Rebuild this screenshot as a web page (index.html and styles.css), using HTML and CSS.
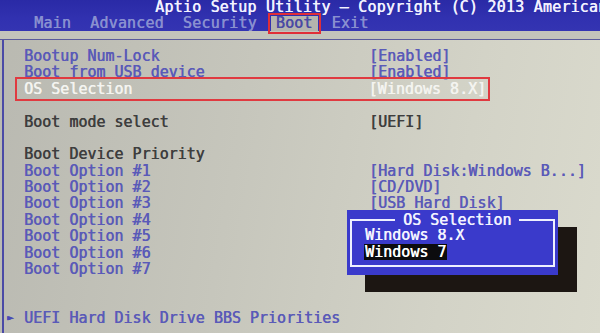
FILE: index.html
```html
<!DOCTYPE html>
<html>
<head>
<meta charset="utf-8">
<link rel="stylesheet" href="styles.css">
</head>
<body>
<div class="screen">
  <header class="top">
    <div class="title">Aptio Setup Utility – Copyright (C) 2013 American</div>
    <nav class="tabs">
      <span class="tab">Main</span>
      <span class="tab">Advanced</span>
      <span class="tab">Security</span>
      <span class="tab active">Boot</span>
      <span class="tab">Exit</span>
    </nav>
  </header>
  <div class="band"></div>
  <main class="panel">
    <div class="row"><span class="lbl opt">Bootup Num-Lock</span><span class="val opt">[Enabled]</span></div>
    <div class="row"><span class="lbl opt">Boot from USB device</span><span class="val opt">[Enabled]</span></div>
    <div class="row sel"><span class="lbl">OS Selection</span><span class="val">[Windows 8.X]</span></div>
    <div class="row"></div>
    <div class="row"><span class="lbl">Boot mode select</span><span class="val">[UEFI]</span></div>
    <div class="row"></div>
    <div class="row"><span class="lbl">Boot Device Priority</span></div>
    <div class="row"><span class="lbl opt">Boot Option #1</span><span class="val opt">[Hard Disk:Windows B...]</span></div>
    <div class="row"><span class="lbl opt">Boot Option #2</span><span class="val opt">[CD/DVD]</span></div>
    <div class="row"><span class="lbl opt">Boot Option #3</span><span class="val opt">[USB Hard Disk]</span></div>
    <div class="row"><span class="lbl opt">Boot Option #4</span></div>
    <div class="row"><span class="lbl opt">Boot Option #5</span></div>
    <div class="row"><span class="lbl opt">Boot Option #6</span></div>
    <div class="row"><span class="lbl opt">Boot Option #7</span></div>
    <div class="row"></div>
    <div class="row"></div>
    <div class="row sub"><span class="arrow">►</span><span class="lbl opt">UEFI Hard Disk Drive BBS Priorities</span></div>
  </main>
  <div class="shadow"></div>
  <div class="popup">
    <div class="frame">
      <div class="ptitle">OS Selection</div>
      <div class="item">Windows 8.X</div>
      <div class="item hl">Windows 7</div>
    </div>
  </div>
</div>
</body>
</html>
```
FILE: styles.css
```css
html, body {
  margin: 0;
  padding: 0;
  width: 600px;
  height: 333px;
  overflow: hidden;
}
.screen {
  position: relative;
  width: 600px;
  height: 333px;
  overflow: hidden;
  font-family: "DejaVu Sans Mono", "Liberation Mono", monospace;
  font-size: 15px;
  text-shadow: 0.5px 0 0 currentColor;
  background: linear-gradient(100deg, #b9b9b1 0%, #c6c6bc 40%, #d3d3c7 75%, #dadacd 100%);
}
.top {
  height: 31px;
  background: linear-gradient(180deg, #2a2aa6 0%, #3131b0 60%, #3434b2 100%);
  display: flex;
  flex-direction: column;
}
.title {
  color: #f2f2ff;
  white-space: nowrap;
  padding-left: 155px;
  height: 14px;
  line-height: 14px;
  letter-spacing: 0.2px;
}
.tabs {
  display: flex;
  padding-left: 34px;
  margin-top: 2px;
  height: 15px;
  line-height: 15px;
  white-space: nowrap;
}
.tab {
  color: #8990d0;
  margin-right: 19px;
  letter-spacing: 0.2px;
}
.tab.active {
  position: relative;
  color: #4a4aa4;
  background: #b4b4ae;
  margin-left: -5px;
  margin-right: 14px;
  padding: 0 5px;
  outline: 2px solid #e02e38;
  outline-offset: 1px;
}
.band {
  height: 8px;
  background: #c3c3bb;
  border-bottom: 1px solid #5a5a9c;
}
.panel {
  border-left: 2px solid #4a4aa6;
  margin-left: 2px;
  padding-top: 8px;
  height: 300px;
  display: flex;
  flex-direction: column;
}
.row {
  height: 16.375px;
  line-height: 16.375px;
  display: flex;
  white-space: nowrap;
}
.lbl {
  padding-left: 20px;
  width: 345px;
  color: #3e3e3e;
}
.val {
  color: #3e3e3e;
}
.opt {
  color: #5a5ab8;
}
.sel {
  margin-left: 15px;
  margin-right: 114px;
  outline: 2px solid #e03a40;
  outline-offset: 2px;
}
.sel .lbl {
  padding-left: 5px;
  width: 345px;
  color: #f4f4f0;
}
.sel .val {
  color: #f4f4f0;
}
.sub .arrow {
  color: #4a4ab4;
  font-size: 11px;
  width: 0;
  padding-left: 3px;
}
.sub .lbl {
  padding-left: 17px;
}
.shadow {
  position: absolute;
  left: 365px;
  top: 227px;
  width: 212px;
  height: 65px;
  background: #1c1612;
}
.popup {
  position: absolute;
  left: 347px;
  top: 210px;
  width: 211px;
  height: 65px;
  background: #3a3acb;
  box-sizing: border-box;
  padding: 9px 3px 8px 3px;
}
.frame {
  border: 2px solid #eef0ff;
  height: 100%;
  box-sizing: border-box;
  padding: 6px 0 0 13px;
  position: relative;
}
.ptitle {
  position: absolute;
  top: -10px;
  left: 43px;
  padding: 0 8px;
  background: #3a3acb;
  color: #f2f2ff;
  line-height: 18px;
}
.item {
  color: #f4f4ff;
  line-height: 16px;
  height: 16px;
  white-space: nowrap;
}
.item.hl {
  display: inline-block;
  background: #0c0c0e;
  color: #ffffff;
  padding: 0 1px;
  margin-left: -1px;
}
```
